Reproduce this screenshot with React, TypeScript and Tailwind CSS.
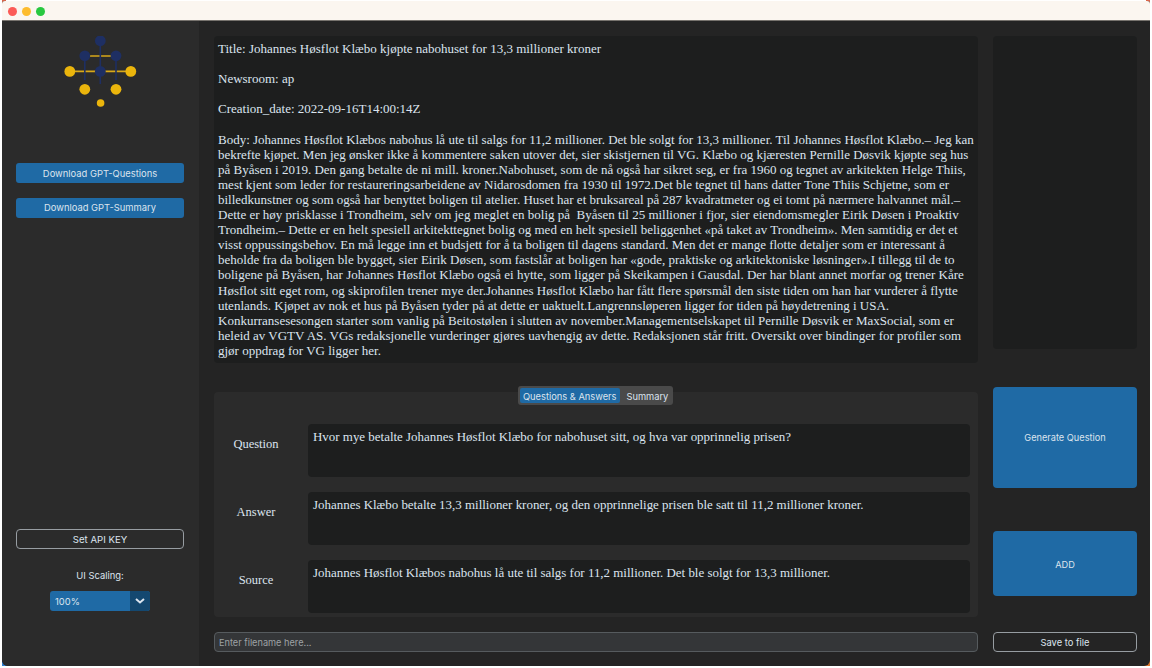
const bodyLines = [
  "Body: Johannes Høsflot Klæbos nabohus lå ute til salgs for 11,2 millioner. Det ble solgt for 13,3 millioner. Til Johannes Høsflot Klæbo.– Jeg kan",
  "bekrefte kjøpet. Men jeg ønsker ikke å kommentere saken utover det, sier skistjernen til VG. Klæbo og kjæresten Pernille Døsvik kjøpte seg hus",
  "på Byåsen i 2019. Den gang betalte de ni mill. kroner.Nabohuset, som de nå også har sikret seg, er fra 1960 og tegnet av arkitekten Helge Thiis,",
  "mest kjent som leder for restaureringsarbeidene av Nidarosdomen fra 1930 til 1972.Det ble tegnet til hans datter Tone Thiis Schjetne, som er",
  "billedkunstner og som også har benyttet boligen til atelier. Huset har et bruksareal på 287 kvadratmeter og ei tomt på nærmere halvannet mål.–",
  "Dette er høy prisklasse i Trondheim, selv om jeg meglet en bolig på  Byåsen til 25 millioner i fjor, sier eiendomsmegler Eirik Døsen i Proaktiv",
  "Trondheim.– Dette er en helt spesiell arkitekttegnet bolig og med en helt spesiell beliggenhet «på taket av Trondheim». Men samtidig er det et",
  "visst oppussingsbehov. En må legge inn et budsjett for å ta boligen til dagens standard. Men det er mange flotte detaljer som er interessant å",
  "beholde fra da boligen ble bygget, sier Eirik Døsen, som fastslår at boligen har «gode, praktiske og arkitektoniske løsninger».I tillegg til de to",
  "boligene på Byåsen, har Johannes Høsflot Klæbo også ei hytte, som ligger på Skeikampen i Gausdal. Der har blant annet morfar og trener Kåre",
  "Høsflot sitt eget rom, og skiprofilen trener mye der.Johannes Høsflot Klæbo har fått flere spørsmål den siste tiden om han har vurderer å flytte",
  "utenlands. Kjøpet av nok et hus på Byåsen tyder på at dette er uaktuelt.Langrennsløperen ligger for tiden på høydetrening i USA.",
  "Konkurransesesongen starter som vanlig på Beitostølen i slutten av november.Managementselskapet til Pernille Døsvik er MaxSocial, som er",
  "heleid av VGTV AS. VGs redaksjonelle vurderinger gjøres uavhengig av dette. Redaksjonen står fritt. Oversikt over bindinger for profiler som",
  "gjør oppdrag for VG ligger her.",
];

const qa = [
  ["Question", "Hvor mye betalte Johannes Høsflot Klæbo for nabohuset sitt, og hva var opprinnelig prisen?"],
  ["Answer", "Johannes Klæbo betalte 13,3 millioner kroner, og den opprinnelige prisen ble satt til 11,2 millioner kroner."],
  ["Source", "Johannes Høsflot Klæbos nabohus lå ute til salgs for 11,2 millioner. Det ble solgt for 13,3 millioner."],
];

function Logo() {
  return (
    <svg width="80" height="72" viewBox="60 36 80 72" className="block">
      <g stroke="#d9a91a" strokeWidth="1.6">
        <line x1="90" y1="56" x2="111" y2="56" />
        <line x1="70" y1="71.4" x2="131" y2="71.4" />
      </g>
      <g stroke="#1e2f63" strokeWidth="1.6">
        <line x1="100.3" y1="41" x2="100.3" y2="84" />
        <line x1="84.8" y1="56" x2="84.8" y2="80" />
        <line x1="116" y1="56" x2="116" y2="80" />
      </g>
      <g fill="#1e2f63">
        <circle cx="100.3" cy="40.8" r="5.4" />
        <circle cx="84.8" cy="55.8" r="5.4" />
        <circle cx="116" cy="55.8" r="5.4" />
        <circle cx="100.3" cy="71.4" r="5.4" />
      </g>
      <g fill="#ebb50c">
        <circle cx="69.8" cy="71.4" r="5.4" />
        <circle cx="130.8" cy="71.4" r="5.4" />
        <circle cx="84.8" cy="89.3" r="5.4" />
        <circle cx="116" cy="89.3" r="5.4" />
        <circle cx="100.6" cy="103" r="3.8" />
      </g>
    </svg>
  );
}

export default function App() {
  return (
    <div className="relative w-[1152px] h-[668px] overflow-hidden bg-white pl-[2px] pr-[2px] pt-[1px] text-[#dce4ee] font-['Inter',sans-serif]">
      <span className="absolute left-[2px] top-0 w-[4px] h-[4px] bg-[#d8664c]" />
      <span className="absolute right-[2px] top-0 w-[4px] h-[4px] bg-[#d8664c]" />
      <span className="absolute left-[2px] top-[660px] w-[6px] h-[6px] bg-[#2f7fd0]" />
      <span className="absolute right-[2px] top-[660px] w-[6px] h-[6px] bg-[#d9762e]" />
      <div className="relative h-[665px] flex flex-col rounded-t-[3px] rounded-b-[6px] overflow-hidden bg-[#242424]">
        <div className="h-[20px] shrink-0 bg-[#fbf6f0] border-b border-[#77736e] flex items-center gap-[5px] pl-[6px] pt-[1px]">
          <span className="w-[9px] h-[9px] rounded-full bg-[#fb5b57]" />
          <span className="w-[9px] h-[9px] rounded-full bg-[#fdbc2e]" />
          <span className="w-[9px] h-[9px] rounded-full bg-[#28c840]" />
        </div>
        <div className="flex-1 flex min-h-0">
          <aside className="w-[197px] shrink-0 pr-[1px] bg-[#2b2b2b] flex flex-col items-center">
            <div className="mt-[15px]"><Logo /></div>
            <button className="mt-[55px] w-[168px] h-[20px] pt-[2px] rounded-[3px] bg-[#1f6aa5] text-[9.4px] text-[#dce4ee]">Download GPT-Questions</button>
            <button className="mt-[15px] w-[168px] h-[20px] pt-[1px] rounded-[3px] bg-[#1f6aa5] text-[9.4px] text-[#dce4ee]">Download GPT-Summary</button>
            <button className="mt-auto w-[168px] h-[20px] pt-[2px] rounded-[4px] border border-[#979da2] text-[9.6px] text-[#dce4ee]">Set API KEY</button>
            <div className="mt-[21px] text-[9.4px] leading-[12px]">UI Scaling:</div>
            <div className="mt-[9px] mb-[55px] w-[100px] h-[20px] rounded-[3px] bg-[#1f6aa5] flex overflow-hidden text-[9.4px]">
              <span className="flex-1 flex items-center pl-[5px] pt-[2px]">100%</span>
              <span className="w-[20px] bg-[#144870] flex items-center justify-center">
                <svg width="10" height="6" viewBox="0 0 10 6" fill="none" stroke="#dce4ee" strokeWidth="2"><path d="M1 1l4 3.5L9 1" /></svg>
              </span>
            </div>
          </aside>
          <main className="flex-1 min-w-0 flex flex-col pl-[15px] pt-[15px]">
            <div className="flex gap-[15px] items-start">
              <div className="w-[764px] h-[327px] shrink-0 rounded-[4px] bg-[#1d1e1e] px-[4px] pt-[5px] font-['Liberation_Serif',serif] text-[13px] leading-[15.1px] text-[#dce4ee] whitespace-pre">
                <div>Title: Johannes Høsflot Klæbo kjøpte nabohuset for 13,3 millioner kroner</div>
                <div className="mt-[15.1px]">Newsroom: ap</div>
                <div className="mt-[15.1px]">Creation_date: 2022-09-16T14:00:14Z</div>
                <div className="mt-[15.1px]">{bodyLines.map((l) => <div key={l}>{l}</div>)}</div>
              </div>
              <div className="w-[144px] h-[313px] shrink-0 rounded-[4px] bg-[#1d1e1e]" />
            </div>
            <div className="flex gap-[15px] mt-[24px] items-start">
              <div className="relative w-[764px] h-[225px] shrink-0 mt-[5px] rounded-[4px] bg-[#2b2b2b] pt-[32px] pr-[8px] flex flex-col gap-[15px]">
                {qa.map(([k, v]) => (
                  <div key={k} className="flex h-[53px]">
                    <div className="w-[94px] shrink-0 flex items-center justify-center pr-[10px] pb-[13px] font-['Liberation_Serif',serif] text-[12.5px]">{k}</div>
                    <div className="flex-1 rounded-[4px] bg-[#1d1e1e] px-[5px] pt-[5px] font-['Liberation_Serif',serif] text-[12.95px] leading-[15.1px]">{v}</div>
                  </div>
                ))}
                <div className="absolute left-[304px] -top-[6px] h-[19px] rounded-[3px] bg-[#4a4a4a] flex items-center p-[2px] text-[9.3px]">
                  <span className="h-[15px] px-[3px] pt-[2px] rounded-[2px] bg-[#1f6aa5] flex items-center">Questions &amp; Answers</span>
                  <span className="h-[15px] pl-[7px] pr-[3px] pt-[2px] flex items-center">Summary</span>
                </div>
              </div>
              <div className="w-[144px] shrink-0 flex flex-col">
                <button className="h-[101px] rounded-[4px] bg-[#1f6aa5] text-[9.2px]">Generate Question</button>
                <button className="mt-[43px] h-[65px] pt-[2px] rounded-[4px] bg-[#1f6aa5] text-[9.2px]">ADD</button>
              </div>
            </div>
            <div className="flex gap-[15px] mt-[15px]">
              <div className="w-[764px] h-[20px] shrink-0 rounded-[4px] bg-[#343638] border border-[#565b5e] flex items-center px-[4px] pt-[2px] text-[9.2px] text-[#9ea2a5]">Enter filename here...</div>
              <button className="w-[144px] h-[20px] pt-[2px] rounded-[4px] border border-[#979da2] text-[9.4px]">Save to file</button>
            </div>
          </main>
        </div>
      </div>
    </div>
  );
}
